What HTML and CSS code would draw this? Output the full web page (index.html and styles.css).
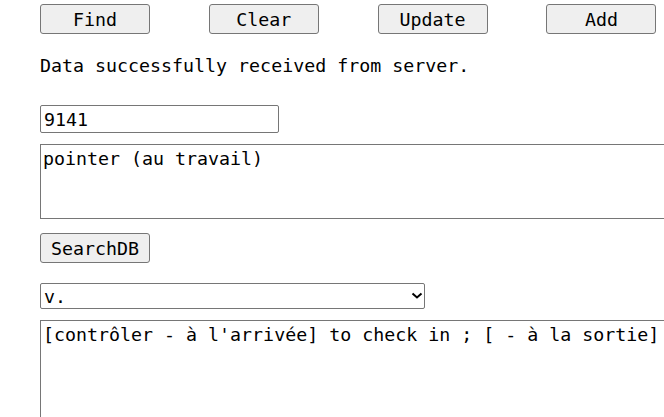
FILE: index.html
```html
<!DOCTYPE html>
<html lang="en">
<head>
<meta charset="utf-8">
<title>Dictionary</title>
<link rel="stylesheet" href="styles.css">
</head>
<body>
<div class="page">
  <div class="toolbar">
    <button class="btn" type="button">Find</button>
    <button class="btn" type="button">Clear</button>
    <button class="btn" type="button">Update</button>
    <button class="btn" type="button">Add</button>
  </div>
  <p class="status">Data successfully received from server.</p>
  <input class="field-id" type="text" value="9141">
  <textarea class="area-word">pointer (au travail)</textarea>
  <div class="search-row">
    <button class="btn" type="button">SearchDB</button>
  </div>
  <div class="select-wrap">
    <select class="pos-select">
      <option>v.</option>
    </select>
    <svg class="chevron" width="12" height="8" viewBox="0 0 12 8" aria-hidden="true">
      <path d="M1.5 1.5 L6 5.5 L10.5 1.5" fill="none" stroke="#000" stroke-width="2"/>
    </svg>
  </div>
  <textarea class="area-def">[contrôler - à l'arrivée] to check in ; [ - à la sortie]</textarea>
</div>
</body>
</html>
```

FILE: styles.css
```css
html, body {
  margin: 0;
  padding: 0;
  overflow: hidden;
  background: #fff;
}

.page {
  display: flex;
  flex-direction: column;
  align-items: flex-start;
  padding: 4px 0 0 40px;
  font-family: "DejaVu Sans Mono", "Liberation Mono", monospace;
  font-size: 18.3px;
  color: #000;
}

.toolbar {
  display: flex;
  gap: 58.8px;
}

.btn {
  box-sizing: border-box;
  width: 110px;
  height: 30px;
  margin: 0;
  padding: 2px 0 0 0;
  background: #efefef;
  border: 1px solid #767676;
  border-radius: 3px;
  font-family: inherit;
  font-size: 18.3px;
  color: #000;
  line-height: 1;
}

.status {
  margin: 21px 0 0 0;
  height: 22px;
  line-height: 22px;
  white-space: nowrap;
}

.field-id {
  box-sizing: border-box;
  margin: 28px 0 0 0;
  width: 239px;
  height: 28px;
  padding: 1px 3px 0 3px;
  border: 1px solid #767676;
  border-radius: 2px;
  font-family: inherit;
  font-size: 18.3px;
  color: #000;
  outline: none;
}

.area-word,
.area-def {
  box-sizing: border-box;
  width: 700px;
  margin: 11px 0 0 0;
  padding: 3px 2px 1px 2px;
  border: 1px solid #767676;
  border-radius: 0;
  font-family: inherit;
  font-size: 18.3px;
  line-height: 21px;
  color: #000;
  resize: none;
  outline: none;
  overflow: hidden;
}

.area-word {
  height: 75px;
}

.area-def {
  height: 140px;
}

.search-row {
  margin-top: 14px;
}

.select-wrap {
  position: relative;
  margin-top: 20px;
}

.pos-select {
  box-sizing: border-box;
  width: 385px;
  height: 26px;
  margin: 0;
  padding: 1px 3px 0 3px;
  border: 1px solid #767676;
  border-radius: 2px;
  background: #fff;
  -webkit-appearance: none;
  appearance: none;
  font-family: inherit;
  font-size: 18.3px;
  color: #000;
  outline: none;
}

.chevron {
  position: absolute;
  left: 371px;
  top: 9px;
  pointer-events: none;
}
```
